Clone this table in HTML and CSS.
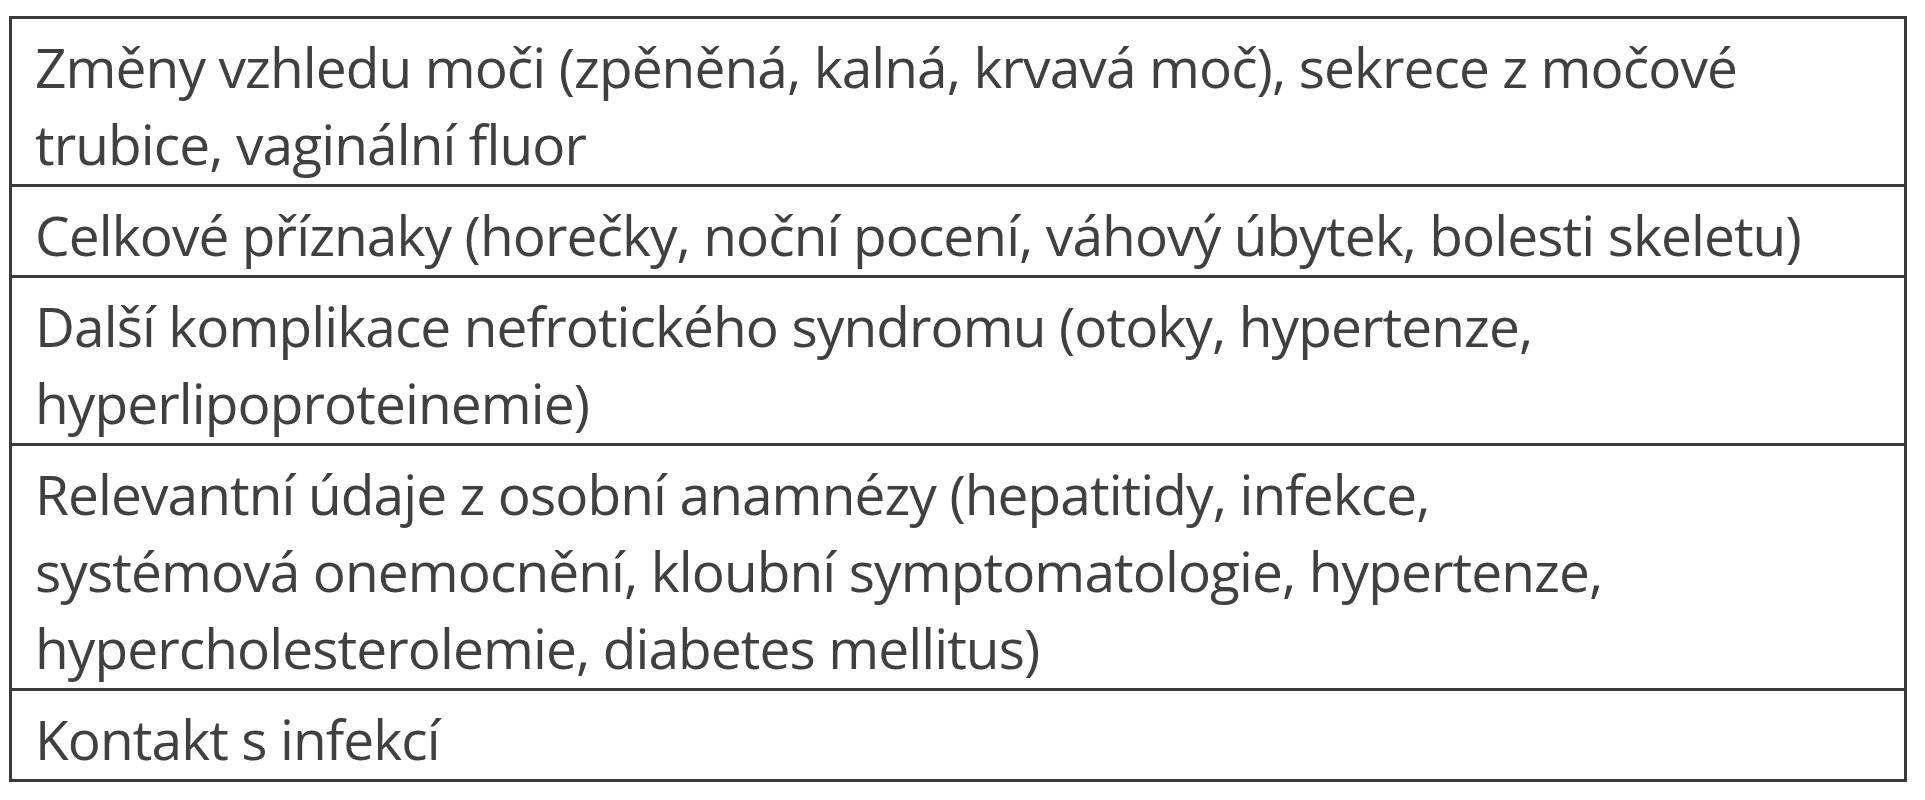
FILE: index.html
```html
<!DOCTYPE html>
<html lang="cs">
<head>
<meta charset="utf-8">
<title>Příznaky</title>
<link rel="stylesheet" href="styles.css">
</head>
<body>
<table class="symptoms">
  <tbody>
    <tr><td>Změny vzhledu moči (zpěněná, kalná, krvavá moč), sekrece z močové<br>trubice, vaginální fluor</td></tr>
    <tr><td>Celkové příznaky (horečky, noční pocení, váhový úbytek, bolesti skeletu)</td></tr>
    <tr><td>Další komplikace nefrotického syndromu (otoky, hypertenze,<br>hyperlipoproteinemie)</td></tr>
    <tr><td>Relevantní údaje z osobní anamnézy (hepatitidy, infekce,<br>systémová onemocnění, kloubní symptomatologie, hypertenze,<br>hypercholesterolemie, diabetes mellitus)</td></tr>
    <tr><td>Kontakt s infekcí</td></tr>
  </tbody>
</table>
</body>
</html>
```

FILE: styles.css
```css
html, body {
  margin: 0;
  padding: 0;
  background: #ffffff;
}

body {
  font-family: "Open Sans", "Noto Sans", "DejaVu Sans", sans-serif;
  color: #404040;
}

.symptoms {
  margin: 16px 0 0 9px;
  width: 1898px;
  border-collapse: separate;
  border-spacing: 0;
  border: 3px solid #3a3a3a;
}

.symptoms td {
  padding: 9px 10px 2px 23px;
  font-size: 55px;
  line-height: 77px;
  letter-spacing: -0.9px;
  white-space: nowrap;
  vertical-align: top;
  text-align: left;
}

.symptoms tr + tr td {
  border-top: 3px solid #3a3a3a;
}
```
